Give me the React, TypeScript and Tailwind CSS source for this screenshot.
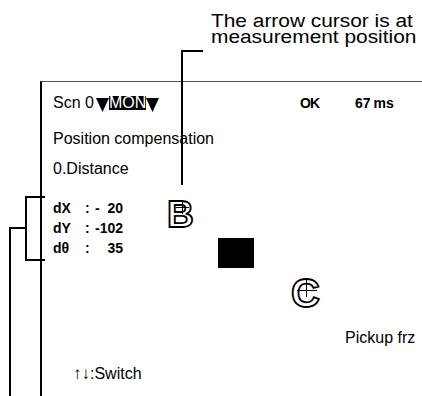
const Tri = ({ className = '' }: { className?: string }) => (
  <svg width="13" height="14" viewBox="0 0 13 14" className={`mt-[3px] shrink-0 ${className}`}>
    <polygon points="0,0 13,0 6.5,14" fill="#000" />
  </svg>
)

const readings = [
  { label: 'dX', sign: '-', value: '20' },
  { label: 'dY', sign: '-', value: '102' },
  { label: 'd\u03b8', sign: '', value: '35' },
]

export default function App() {
  return (
    <div className="relative h-[396px] w-[422px] overflow-hidden bg-white font-['Liberation_Sans',Arial,sans-serif] text-black">
      {/* callout caption */}
      <div className="h-[81px] pl-[211px] pt-[13px] text-[18px] leading-[16px]">
        <p className="h-[16px] origin-left scale-x-[1.16] whitespace-nowrap">The arrow cursor is at</p>
        <p className="h-[16px] origin-left scale-x-[1.16] whitespace-nowrap">measurement position</p>
      </div>

      {/* monitor screen */}
      <div className="h-[315px] ml-[40px] border-l-2 border-t border-l-black border-t-[#555] pl-[11px] pt-[13px] text-[16px] leading-[16px]">
        <div className="flex h-[16px] items-start">
          <div className="flex w-[247px] items-start">
            <span>Scn 0</span>
            <Tri className="ml-[2px]" />
            <span className="mt-[1px] h-[14px] bg-black leading-[14px] text-white">MON</span>
            <Tri />
          </div>
          <span className="w-[55px] text-[14px] font-bold tracking-[-1px]">OK</span>
          <span className="text-[14px] font-bold">
            67<span className="ml-[3px]">ms</span>
          </span>
        </div>

        <div className="mt-[20px]">Position compensation</div>
        <div className="mt-[14px]">0.Distance</div>

        <div className="mt-[21px] text-[14px] font-bold leading-[20px]">
          {readings.map((r) => (
            <div key={r.label} className="flex">
              <span className="w-[32px]">{r.label}</span>
              <span className="w-[10px]">:</span>
              <span className="flex w-[28px] justify-between">
                <span>{r.sign}</span>
                <span>{r.value}</span>
              </span>
            </div>
          ))}
        </div>

        <div className="ml-[292px] mt-[72px] whitespace-nowrap">Pickup frz</div>
        <div className="ml-[20px] mt-[20px]">
          <span className="text-[17px]">{'\u2191\u2193'}</span>:Switch
        </div>
      </div>

      {/* camera image objects */}
      <span className="absolute left-[167px] top-[196px] text-[37px] font-bold leading-none text-transparent [-webkit-text-stroke:1.8px_#000]">
        B
      </span>
      <div className="absolute left-[182px] top-[200px] h-[14px] w-px bg-black" />
      <div className="absolute left-[176px] top-[207px] h-px w-[13px] bg-black" />

      <div className="absolute left-[218px] top-[238px] h-[30px] w-[36px] bg-black" />

      <span className="absolute left-[291px] top-[273px] text-[40px] font-bold leading-none text-transparent [-webkit-text-stroke:1.8px_#000]">
        C
      </span>
      <div className="absolute left-[306px] top-[280px] h-[17px] w-px bg-black" />
      <div className="absolute left-[297px] top-[290px] h-px w-[20px] bg-black" />

      {/* callout leader */}
      <div className="absolute left-[181px] top-[50px] h-[2px] w-[22px] bg-black" />
      <div className="absolute left-[181px] top-[50px] h-[135px] w-[2px] bg-black" />

      {/* bracket for dX/dY/dθ */}
      <div className="absolute left-[25px] top-[196px] h-[2px] w-[20px] bg-black" />
      <div className="absolute left-[25px] top-[196px] h-[65px] w-[2px] bg-black" />
      <div className="absolute left-[25px] top-[259px] h-[2px] w-[20px] bg-black" />
      <div className="absolute left-[9px] top-[227px] h-[2px] w-[17px] bg-black" />
      <div className="absolute left-[9px] top-[227px] h-[169px] w-[2px] bg-black" />
    </div>
  )
}
